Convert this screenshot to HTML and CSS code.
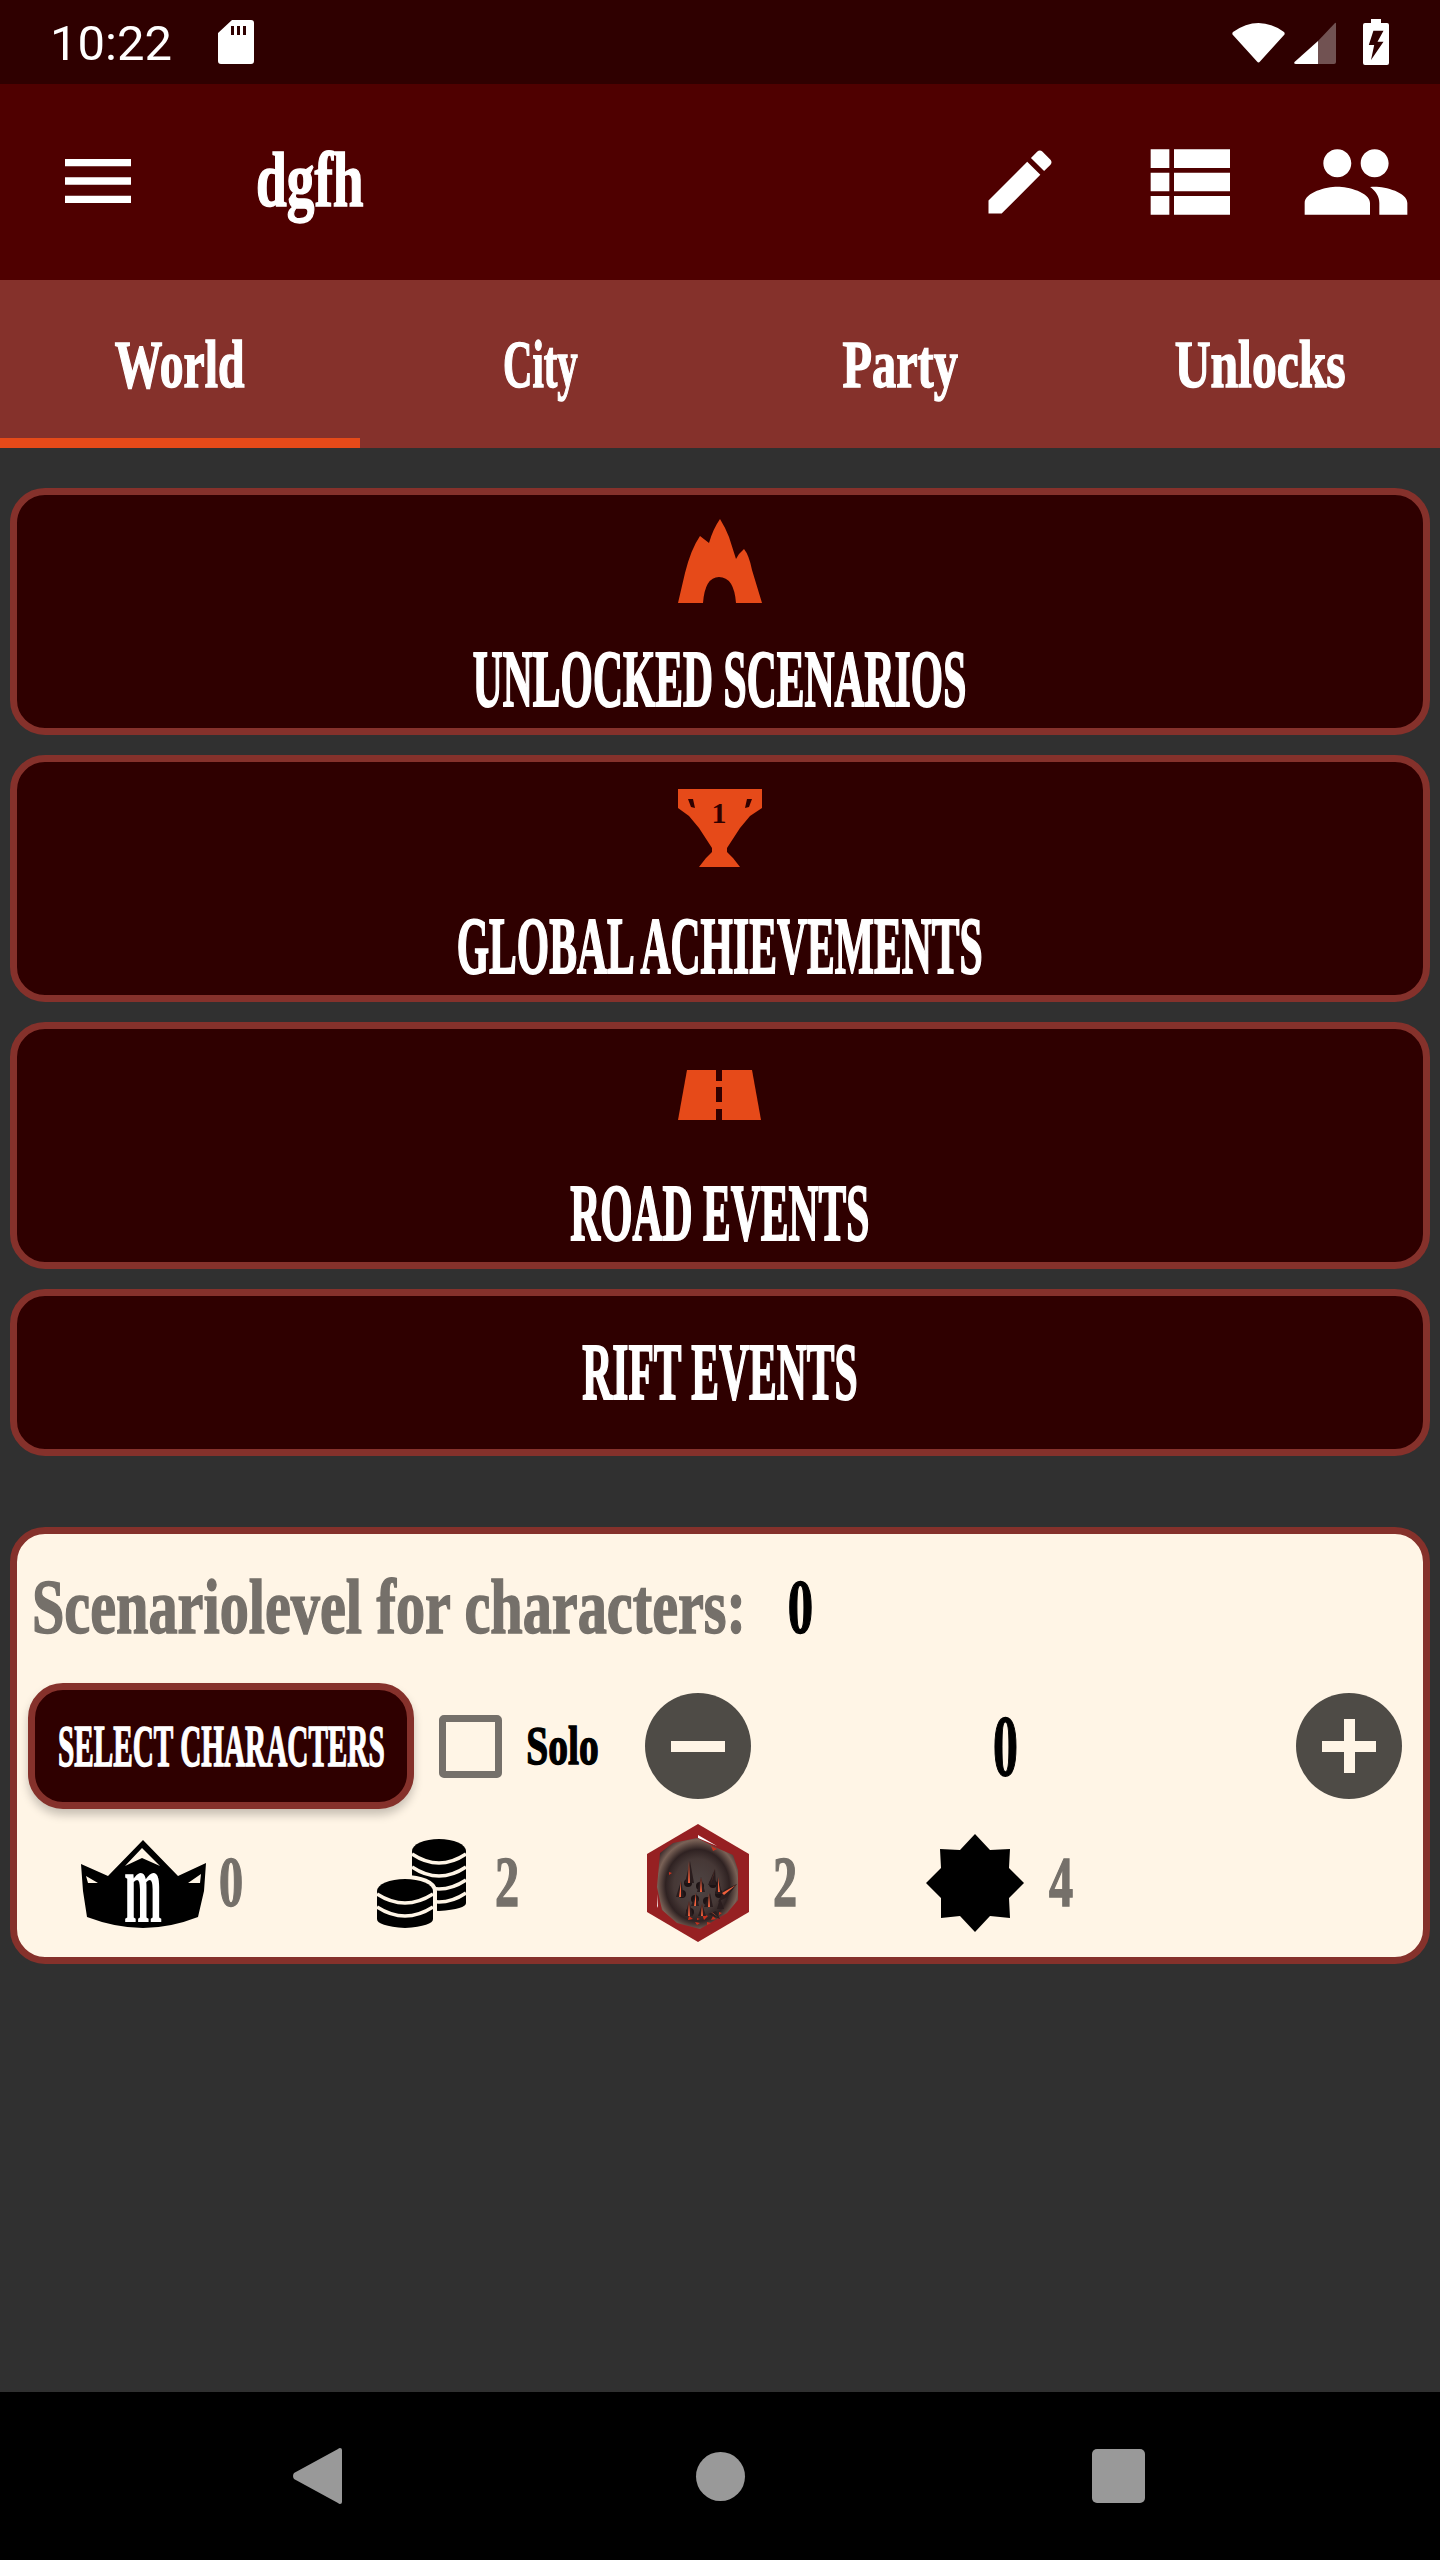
FILE: index.html
```html
<!DOCTYPE html>
<html lang="en">
<head>
<meta charset="utf-8">
<title>dgfh</title>
<link rel="stylesheet" href="styles.css">
</head>
<body>
<div class="screen">
  <header class="status">
    <span class="time">10:22</span>
    <svg class="sd" viewBox="0 0 36 44"><path fill="#fff" fill-rule="evenodd" d="M14 0h19a3 3 0 0 1 3 3v38a3 3 0 0 1-3 3H3a3 3 0 0 1-3-3V13zM13 6v9h3V6zm6 0v9h3V6zm6 0v9h3V6z"/></svg>
    <span class="status-space"></span>
    <svg class="wifi" viewBox="0 0 53 42"><path fill="#fff" d="M1 11Q26.500-7 52 11q1 1 .5 2.500L28 40.500q-1.500 2-3 0L.5 13.500Q0 12 1 11z"/></svg>
    <svg class="signal" viewBox="0 0 42 42"><path fill="#fff" opacity=".32" d="M24 42V19L41 1q1-1 1 1v38q0 2-2 2z"/><path fill="#fff" d="M24 19v23H2q-2.500 0-1.500-2z"/></svg>
    <svg class="battery" viewBox="0 0 26 46"><path fill="#fff" fill-rule="evenodd" d="M8 0h10v4h6a2 2 0 0 1 2 2v38a2 2 0 0 1-2 2H2a2 2 0 0 1-2-2V6a2 2 0 0 1 2-2h6zM10.400 11.700H20.500L14.500 22.700H20.500L8 41 11.200 26H5.800z"/></svg>
  </header>

  <div class="appbar">
    <svg class="ic-menu" viewBox="0 0 24 24"><path fill="#fff" d="M3 18h18v-2H3v2zm0-5h18v-2H3v2zm0-7v2h18V6H3z"/></svg>
    <div class="fit fit-title"><span class="bl title">dgfh</span></div>
    <svg class="ic-edit" viewBox="0 0 24 24"><path fill="#fff" d="M3 17.250V21h3.750L17.810 9.940l-3.750-3.750L3 17.250zM20.710 7.040c.39-.39.39-1.020 0-1.410l-2.340-2.340c-.39-.39-1.020-.39-1.410 0l-1.830 1.830 3.750 3.750 1.830-1.830z"/></svg>
    <svg class="ic-list" viewBox="0 0 24 24"><path fill="#fff" d="M4 14h4v-4H4v4zm0 5h4v-4H4v4zM4 9h4V5H4v4zm5 5h12v-4H9v4zm0 5h12v-4H9v4zM9 5v4h12V5H9z"/></svg>
    <svg class="ic-people" viewBox="0 0 24 24"><path fill="#fff" d="M16 11c1.660 0 2.990-1.340 2.990-3S17.660 5 16 5c-1.660 0-3 1.340-3 3s1.340 3 3 3zm-8 0c1.660 0 2.990-1.340 2.990-3S9.660 5 8 5C6.340 5 5 6.340 5 8s1.340 3 3 3zm0 2c-2.330 0-7 1.170-7 3.500V19h14v-2.500c0-2.330-4.670-3.500-7-3.500zm8 0c-.29 0-.62.020-.97.050 1.160.84 1.970 1.970 1.970 3.450V19h6v-2.500c0-2.330-4.670-3.500-7-3.500z"/></svg>
  </div>

  <nav class="tabs">
    <div class="tab tab-active"><span class="bl tab-label s-world">World</span></div>
    <div class="tab"><span class="bl tab-label s-city">City</span></div>
    <div class="tab"><span class="bl tab-label s-party">Party</span></div>
    <div class="tab"><span class="bl tab-label s-unlocks">Unlocks</span></div>
  </nav>

  <main class="content">
    <section class="card">
      <svg class="card-icon" viewBox="0 0 84 84"><path fill="#e64a19" d="M42 0Q47 8 51 18L58 40Q61 34 66 30 71 36 74 51L84 84H58Q56 58 41 58 27 58 25 84H0L7 54Q13 30 22 17L31 24Q35 10 42 0z"/></svg>
      <div class="bl card-label">UNLOCKED SCENARIOS</div>
    </section>
    <section class="card">
      <svg class="card-icon" viewBox="0 0 84 84">
        <path fill="#e64a19" d="M0 3H84V22L72 30 62 42 49 62V66L55 72 62 81H21L28 72 34 66V62L21 42 11 30 0 22z"/>
        <path fill="#2f0000" d="M10 13h5l2 9-4-1zM74 13h-5l-2 9 4-1z"/>
        <text class="trophy-num" x="41" y="37">1</text>
      </svg>
      <div class="bl card-label">GLOBAL ACHIEVEMENTS</div>
    </section>
    <section class="card">
      <svg class="card-icon" viewBox="0 0 84 84">
        <path fill="#e64a19" d="M9 17h65l9 50H0z"/>
        <path fill="#2f0000" d="M38 17h6v11h-6zM38 34h6v15h-6zM38 56h6v11h-6z"/>
      </svg>
      <div class="bl card-label">ROAD EVENTS</div>
    </section>
    <section class="card card-plain">
      <div class="bl card-label">RIFT EVENTS</div>
    </section>

    <section class="panel">
      <div class="panel-head">
        <div class="fit fit-head"><span class="bl head-text">Scenariolevel for characters:</span></div>
        <div class="fit fit-level"><span class="bl level">0</span></div>
      </div>
      <div class="panel-controls">
        <button class="select-btn"><span class="bl select-text">SELECT CHARACTERS</span></button>
        <span class="checkbox"></span>
        <div class="fit fit-solo"><span class="bl solo">Solo</span></div>
        <span class="round-btn round-minus"><span class="bar-h"></span></span>
        <div class="fit fit-count"><span class="bl count">0</span></div>
        <span class="round-btn round-plus"><span class="bar-h"></span><span class="bar-v"></span></span>
      </div>
      <div class="panel-stats">
        <svg class="crown" viewBox="0 -8 150 121">
          <path d="M73 9L108 45 136 32 134 60 128 86Q100 97 73 97 46 97 17 86L13 60 11 33 38 45z"/>
          <path fill="#fff5e6" d="M55 35L72 17 90 35 72 27zM16 45L28 52H18zM131 43L118 52H130z"/>
          <text class="crown-m" x="73" y="91" textLength="38" lengthAdjust="spacingAndGlyphs">m</text>
        </svg>
        <div class="fit fit-stat stat-crown"><span class="bl stat">0</span></div>
        <svg class="coins" viewBox="0 0 110 105">
          <path d="M47 20a27 12 0 0 1 54 0v52q0 6-27 8-27-2-27-8z"/>
          <path fill="none" stroke="#fff5e6" stroke-width="3.500" d="M47 23q27 18 54 0M47 36q27 18 54 0M47 49q27 18 54 0M47 62q27 18 54 0"/>
          <path class="coin-front" d="M12 60a28 12 0 0 1 56 0v28q0 7-28 9-28-2-28-9z"/>
          <path fill="none" stroke="#fff5e6" stroke-width="3.500" d="M12 63q28 18 56 0M12 76q28 18 56 0"/>
        </svg>
        <div class="fit fit-stat stat-coins"><span class="bl stat">2</span></div>
        <svg class="hex" viewBox="0 0 102 118">
          <defs>
            <radialGradient id="rock" cx=".5" cy=".52" r=".58">
              <stop offset="0" stop-color="#4f4544"/>
              <stop offset=".5" stop-color="#463836"/>
              <stop offset=".68" stop-color="#2f2222"/>
              <stop offset=".86" stop-color="#7a6257"/>
              <stop offset="1" stop-color="#3b2b2b"/>
            </radialGradient>
          </defs>
          <path fill="#962022" d="M51 0l51 30v58l-51 30L0 88V30z"/>
          <path fill="#fff" d="M51 11l19 11-19-8zM10 70l1 14-1-2z"/>
          <path fill="url(#rock)" d="M13 29l13-10 24-5 20 10 16 7 5 15v30L80 89l-27 16-23-6-15-13-5-23z"/>
          <path fill="#c9301c" d="M42 92l4 3-5 1zM55 90l6 2-4 4zM66 92l3 3-5 1zM64 22l6 3-4 2zM22 48l3 1-3 2zM48 98l5 1-3 2zM60 98l4 1-4 2zM50 94l3 1-3 1zM72 88l3 1-3 2z"/>
          <circle fill="#1d1314" cx="41" cy="59" r="4"/><circle fill="#1d1314" cx="53" cy="62" r="4"/><circle fill="#1d1314" cx="66" cy="60" r="4"/><circle fill="#1d1314" cx="48" cy="75" r="4"/><circle fill="#1d1314" cx="60" cy="77" r="4"/><circle fill="#1d1314" cx="72" cy="70" r="4"/><circle fill="#1d1314" cx="35" cy="70" r="4"/><circle fill="#1d1314" cx="43" cy="88" r="4"/>
          <path fill="#2a1d1e" d="M38 59h9l-4-22zM29 73h8l-3-16zM50 68h8l-4-15zM61 61h8l-1-16zM68 70h7l-4-17zM71 78l9-5 10-13-13 6zM44 82h8l-3-13zM57 83h9l-3-14zM70 85h7l-4-11zM38 92h8l-4-15zM51 92h8l-4-12zM61 90l12 5-4-8z"/>
          <path fill="#f0603c" d="M41 59l2 0-1-22zM32 73h2l0-16zM53 68h2l-1-15zM64 60l2-8 2-7zM71 68l2 0-2-15zM77 71l12-10-14 8zM47 82h2l0-13zM61 83h2l-1-14zM41 92l2 0-1-15zM54 92h2l-1-12zM64 88l8 6-6-5z"/>
        </svg>
        <div class="fit fit-stat stat-hex"><span class="bl stat">2</span></div>
        <svg class="star" viewBox="0 0 98 98"><path d="M49 0l15 16 20-1-1 19 15 15-15 15 1 20-20-2-15 16-15-16-19 2V64L0 49l15-15-1-19 20 1z"/></svg>
        <div class="fit fit-stat stat-star"><span class="bl stat">4</span></div>
      </div>
    </section>
  </main>

  <footer class="navbar">
    <svg class="nav-back" viewBox="0 0 49 56"><path fill="#999" d="M47 0q2 0 2 2v52q0 2-2 2-1 0-2-1L1 31q-2-3 0-6L45 1q1-1 2-1z"/></svg>
    <span class="nav-home"></span>
    <span class="nav-recent"></span>
  </footer>
</div>
</body>
</html>
```

FILE: styles.css
```css
* { box-sizing: border-box; }
html, body { margin: 0; padding: 0; background: #303030; }
.screen { width: 1440px; height: 2560px; display: flex; flex-direction: column; overflow: hidden; }

/* blackletter stand-in: a heavy bold serif squeezed horizontally */
.bl {
  display: inline-block;
  font-family: "Liberation Serif", "Noto Sans CJK SC", serif;
  font-weight: 700;
  white-space: nowrap;
  transform-origin: center;
  -webkit-text-stroke: 1.5px currentColor;
}
.fit { display: flex; justify-content: center; flex: none; }

/* status bar */
.status { height: 84px; flex: none; background: #2f0000; display: flex; align-items: center; padding: 0 51px; }
.time { font: 400 49px/49px Roboto, sans-serif; color: #fff; margin-top: 3px; margin-left: -1px; }
.sd { width: 36px; height: 44px; margin-left: 46px; }
.status-space { flex: 1; }
.wifi { width: 53px; height: 42px; }
.signal { width: 42px; height: 42px; margin-left: 9px; margin-top: 2px; }
.battery { width: 26px; height: 46px; margin-left: 27px; }

/* app bar */
.appbar { height: 196px; flex: none; background: #4f0000; display: flex; align-items: center; padding-left: 54px; }
.ic-menu { width: 88px; height: 88px; margin-bottom: 3px; }
.fit-title { width: 108px; margin-left: 114px; margin-right: auto; margin-bottom: 4px; }
.title { font-size: 79px; line-height: 54px; color: #fff; transform: scaleX(.7); }
.ic-edit { width: 84px; height: 84px; }
.ic-list { width: 112px; height: 112px; margin-left: 70px; }
.ic-people { width: 112px; height: 112px; margin-left: 56px; margin-right: 28px; }

/* tabs */
.tabs { height: 168px; flex: none; background: #85312b; display: flex; }
.tab { flex: 1; display: flex; justify-content: center; padding-top: 59px; }
.tab-active { border-bottom: 10px solid #e64a19; }
.tab-label { font-size: 68px; line-height: 50px; color: #fff; height: 50px; }
.s-world { transform: scaleX(.7); }
.s-city { transform: scaleX(.6); }
.s-party { transform: scaleX(.71); }
.s-unlocks { transform: scaleX(.73); }

/* list */
.content { flex: 1; padding: 40px 10px 0; display: flex; flex-direction: column; }
.card {
  height: 247px;
  margin-bottom: 20px;
  background: #2f0000;
  border: 7px solid #85312b;
  border-radius: 35px;
  padding-top: 24px;
  display: flex;
  flex-direction: column;
  align-items: center;
}
.card-plain { height: 167px; padding-top: 49px; }
.card-icon { width: 84px; height: 84px; margin-bottom: 49px; flex: none; }
.card-label { font-size: 80px; line-height: 54px; height: 54px; color: #fff; transform: scaleX(.52); -webkit-text-stroke-width: 2px; }
.trophy-num { font: 700 30px "Liberation Serif", serif; fill: #2f0000; text-anchor: middle; }

/* panel */
.panel {
  margin-top: 51px;
  height: 437px;
  background: #fff5e6;
  border: 7px solid #85312b;
  border-radius: 35px;
  padding: 46px 0 0 11px;
}
.panel-head { display: flex; margin-left: 3px; }
.fit-head { width: 715px; }
.head-text { font-size: 78px; line-height: 54px; color: #75706a; transform: scaleX(.747); }
.fit-level { width: 26px; margin-left: 41px; }
.level { font-size: 78px; line-height: 54px; color: #000; transform: scaleX(.65); }

.panel-controls { display: flex; align-items: center; margin-top: 49px; height: 126px; }
.select-btn {
  width: 386px;
  height: 126px;
  flex: none;
  padding: 0;
  display: flex;
  justify-content: center;
  align-items: center;
  background: #2f0000;
  border: 7px solid #85312b;
  border-radius: 35px;
  box-shadow: 0 6px 10px rgba(0, 0, 0, .22);
}
.select-text { font-size: 60px; line-height: 40px; color: #fff; transform: scaleX(.487); }
.checkbox { width: 63px; height: 63px; flex: none; margin-left: 25px; border: 7px solid #75706a; border-radius: 5px; }
.fit-solo { width: 72px; margin-left: 25px; }
.solo { font-size: 54px; line-height: 38px; color: #000; transform: scaleX(.73); }
.round-btn { width: 106px; height: 106px; flex: none; border-radius: 50%; background: #4e4b46; display: flex; align-items: center; justify-content: center; position: relative; }
.round-minus { margin-left: 46px; }
.round-plus { margin-left: 278px; }
.bar-h { width: 54px; height: 11px; background: #fff5e6; }
.bar-v { width: 11px; height: 54px; background: #fff5e6; position: absolute; }
.fit-count { width: 25px; margin-left: 242px; }
.count { font-size: 86px; line-height: 59px; color: #000; transform: scaleX(.58); }

.panel-stats { display: flex; align-items: center; margin-top: 15px; height: 118px; }
.crown { width: 150px; height: 121px; margin-left: 42px; flex: none; }
.crown-m { font: 700 104px "Liberation Serif", serif; fill: #fff; text-anchor: middle; }
.coins { width: 110px; height: 105px; margin-left: 122px; flex: none; }
.coin-front { stroke: #fff5e6; stroke-width: 8px; paint-order: stroke; }
.hex { width: 102px; height: 118px; margin-left: 128px; flex: none; }
.star { width: 98px; height: 98px; margin-left: 129px; flex: none; }
.fit-stat { width: 24px; margin-bottom: 3px; }
.stat { font-size: 72px; line-height: 50px; color: #75706a; transform: scaleX(.67); }
.stat-crown { margin-left: -1px; }
.stat-coins { margin-left: 20px; }
.stat-hex { margin-left: 24px; }
.stat-star { margin-left: 25px; }

/* system nav */
.navbar { height: 168px; flex: none; background: #000; display: flex; align-items: center; padding-left: 293px; }
.nav-back { width: 49px; height: 56px; flex: none; }
.nav-home { width: 49px; height: 49px; border-radius: 50%; background: #999; margin-left: 354px; flex: none; }
.nav-recent { width: 53px; height: 54px; border-radius: 5px; background: #999; margin-left: 347px; flex: none; }
```
